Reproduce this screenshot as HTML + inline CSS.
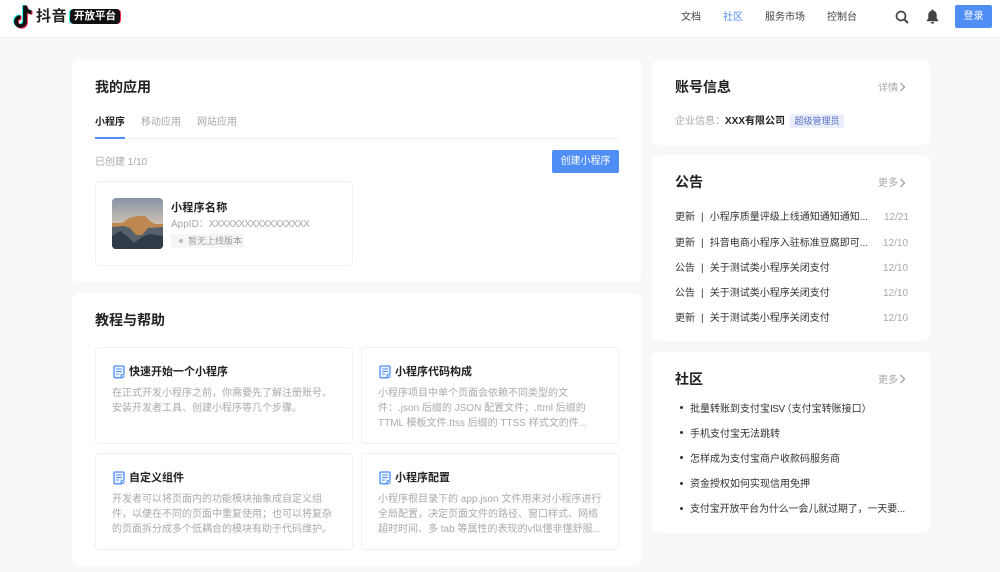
<!DOCTYPE html>
<html lang="zh"><head><meta charset="utf-8"><title>抖音开放平台</title>
<style>
*{margin:0;padding:0;box-sizing:border-box}
html,body{width:1000px;height:572px;overflow:hidden;background:#f8f8f8}
body{position:relative;font-family:"Liberation Sans","Noto Sans CJK SC",sans-serif;font-size:10px;color:#333}
.a{position:absolute;white-space:nowrap;line-height:14px}
.card{position:absolute;background:#fff;border-radius:7px}
.box{position:absolute;background:#fff;border:1px solid #f1f1f1;border-radius:4px}
.h{font-size:14px;font-weight:700;color:#222;line-height:20px}
.g{color:#a8a8a8}
.d{color:#aaa;line-height:15px}
.t{font-size:11px;font-weight:700;color:#222}
.n{color:#444}
.l{color:#333}
.r{word-spacing:.25px}
</style></head><body>
<div style="position:absolute;left:0;top:0;width:1000px;height:38px;background:#fff;border-bottom:1px solid #f0f0f0"></div>
<svg style="position:absolute;left:12px;top:5px" width="22" height="24" viewBox="0 0 22 24">
<g fill="none" stroke-width="3.800">
<g stroke="#25f4ee" transform="translate(-1 -.7)"><path d="M13 .5v16a4.500 4.500 0 1 1-4.500-4.500"/><path d="M13 1c.3 3.600 2.800 6 6.500 6.200"/></g>
<g stroke="#fe2c55" transform="translate(1 .8)"><path d="M13 .5v16a4.500 4.500 0 1 1-4.500-4.500"/><path d="M13 1c.3 3.600 2.800 6 6.500 6.200"/></g>
<g stroke="#111"><path d="M13 .5v16a4.500 4.500 0 1 1-4.500-4.500"/><path d="M13 1c.3 3.600 2.800 6 6.500 6.200"/></g>
</g></svg>
<div class="a" style="left:36px;top:7px;font-size:15px;line-height:20px;color:#222;font-weight:700;letter-spacing:.6px">抖音</div>
<div style="position:absolute;left:70px;top:9px;width:50px;height:15px;background:#111;border-radius:4px;box-shadow:-1px 0 0 #25f4ee,1px 0 0 #fe2c55"></div>
<div class="a" style="left:74px;top:9px;line-height:15px;font-size:10.500px;color:#fff;font-weight:700">开放平台</div>
<div class="a n" style="left:681px;top:11px">文档</div>
<div class="a" style="left:723px;top:11px;color:#4f8ef7">社区</div>
<div class="a n" style="left:765px;top:11px">服务市场</div>
<div class="a n" style="left:827px;top:11px">控制台</div>
<svg style="position:absolute;left:895px;top:10px" width="14" height="14" viewBox="0 0 14 14"><circle cx="6" cy="6" r="4.500" fill="none" stroke="#444" stroke-width="1.700"/><path d="M9.300 9.300L13 13" stroke="#444" stroke-width="2"/></svg>
<svg style="position:absolute;left:926px;top:9px" width="13" height="15" viewBox="0 0 13 15"><path d="M6.500 .5c-.8 0-1.100.5-1.100 1.200C3.400 2.300 2.300 3.800 2.300 6v3.500L.8 11.300v1h11.400v-1L10.700 9.500V6c0-2.200-1.100-3.700-3.100-4.300 0-.7-.3-1.200-1.100-1.200z" fill="#444"/><path d="M4.800 13h3.400a1.700 1.700 0 0 1-3.400 0z" fill="#444"/></svg>
<div class="a" style="left:955px;top:5px;width:37px;height:23px;line-height:24px;background:#4f8ef7;color:#fff;text-align:center;border-radius:2px">登录</div>

<div class="card" style="left:72px;top:60px;width:569px;height:222px"></div>
<div class="a h" style="left:95px;top:77px">我的应用</div>
<div class="a" style="left:95px;top:116px;color:#222;font-weight:700">小程序</div>
<div class="a g" style="left:141px;top:116px">移动应用</div>
<div class="a g" style="left:197px;top:116px">网站应用</div>
<div style="position:absolute;left:95px;top:138px;width:524px;height:1px;background:#f0f0f0"></div>
<div style="position:absolute;left:95px;top:137px;width:30px;height:2px;background:#4f8ef7"></div>
<div class="a g" style="left:95px;top:156px">已创建 1/10</div>
<div class="a" style="left:552px;top:150px;width:67px;height:23px;line-height:24px;background:#4f8ef7;color:#fff;text-align:center;border-radius:2px">创建小程序</div>
<div class="box" style="left:95px;top:181px;width:258px;height:85px"></div>
<svg style="position:absolute;left:112px;top:198px;border-radius:4px" width="51" height="51" viewBox="0 0 51 51">
<defs><linearGradient id="s" x1="0" y1="0" x2="0" y2="1"><stop offset="0" stop-color="#8694a6"/><stop offset=".5" stop-color="#cbbfb3"/></linearGradient></defs>
<rect width="51" height="51" fill="url(#s)"/>
<path d="M0 25l10 0 7-5 8-2 8 0 5 5 5 3 8 0v25H0z" fill="#bf8850"/>
<path d="M0 29l12-1 6 2 6 7 6 0 6-7 15-1v22H0z" fill="#56616b"/>
<path d="M0 38l8-5 8 6 6 6 8-6 8-3 13 2v13H0z" fill="#2f3b47"/>
</svg>
<div class="a" style="left:171px;top:201px;font-size:11px;font-weight:700;color:#222;letter-spacing:.3px">小程序名称</div>
<div class="a g" style="left:171px;top:218px">AppID：<span style="letter-spacing:-.77px">XXXXXXXXXXXXXXXXX</span></div>
<div style="position:absolute;left:171px;top:234px;width:73px;height:14px;background:#f5f5f5;border-radius:2px"></div>
<div style="position:absolute;left:179px;top:239px;width:4px;height:4px;background:#bbb;border-radius:50%"></div>
<div class="a" style="left:188px;top:234px;font-size:9px;color:#999">暂无上线版本</div>

<div class="card" style="left:72px;top:293px;width:569px;height:273px"></div>
<div class="a h" style="left:95px;top:310px">教程与帮助</div>

<div class="box" style="left:95px;top:347px;width:258px;height:97px"></div>
<div class="box" style="left:361px;top:347px;width:258px;height:97px"></div>
<div class="box" style="left:95px;top:453px;width:258px;height:97px"></div>
<div class="box" style="left:361px;top:453px;width:258px;height:97px"></div>

<svg style="position:absolute;left:113px;top:365px" width="13" height="14" viewBox="0 0 13 14"><path d="M9 12.800H2a1 1 0 0 1-1-1V2a1 1 0 0 1 1-1h8a1 1 0 0 1 1 1v7" fill="#eaf1fe" stroke="#4f8ef7" stroke-width="1.300"/><path d="M3.200 4h5.600M3.200 6.500h5.600M3.200 9h2.500" fill="none" stroke="#4f8ef7" stroke-width="1.100"/><circle cx="9.500" cy="11" r="1.500" fill="none" stroke="#4f8ef7" stroke-width="1.100"/></svg>
<svg style="position:absolute;left:379px;top:365px" width="13" height="14" viewBox="0 0 13 14"><path d="M9 12.800H2a1 1 0 0 1-1-1V2a1 1 0 0 1 1-1h8a1 1 0 0 1 1 1v7" fill="#eaf1fe" stroke="#4f8ef7" stroke-width="1.300"/><path d="M3.200 4h5.600M3.200 6.500h5.600M3.200 9h2.500" fill="none" stroke="#4f8ef7" stroke-width="1.100"/><circle cx="9.500" cy="11" r="1.500" fill="none" stroke="#4f8ef7" stroke-width="1.100"/></svg>
<svg style="position:absolute;left:113px;top:471px" width="13" height="14" viewBox="0 0 13 14"><path d="M9 12.800H2a1 1 0 0 1-1-1V2a1 1 0 0 1 1-1h8a1 1 0 0 1 1 1v7" fill="#eaf1fe" stroke="#4f8ef7" stroke-width="1.300"/><path d="M3.200 4h5.600M3.200 6.500h5.600M3.200 9h2.500" fill="none" stroke="#4f8ef7" stroke-width="1.100"/><circle cx="9.500" cy="11" r="1.500" fill="none" stroke="#4f8ef7" stroke-width="1.100"/></svg>
<svg style="position:absolute;left:379px;top:471px" width="13" height="14" viewBox="0 0 13 14"><path d="M9 12.800H2a1 1 0 0 1-1-1V2a1 1 0 0 1 1-1h8a1 1 0 0 1 1 1v7" fill="#eaf1fe" stroke="#4f8ef7" stroke-width="1.300"/><path d="M3.200 4h5.600M3.200 6.500h5.600M3.200 9h2.500" fill="none" stroke="#4f8ef7" stroke-width="1.100"/><circle cx="9.500" cy="11" r="1.500" fill="none" stroke="#4f8ef7" stroke-width="1.100"/></svg>

<div class="a t" style="left:129px;top:365px">快速开始一个小程序</div>
<div class="a d" style="left:112px;top:386px">在正式开发小程序之前，你需要先了解注册账号、<br>安装开发者工具、创建小程序等几个步骤。</div>
<div class="a t" style="left:395px;top:365px">小程序代码构成</div>
<div class="a d" style="left:378px;top:386px">小程序项目中单个页面会依赖不同类型的文<br>件：.json 后缀的 JSON 配置文件；.ttml 后缀的<br>TTML 模板文件.ttss 后缀的 TTSS 样式文的件...</div>
<div class="a t" style="left:129px;top:471px">自定义组件</div>
<div class="a d" style="left:112px;top:492px">开发者可以将页面内的功能模块抽象成自定义组<br>件，以便在不同的页面中重复使用；也可以将复杂<br>的页面拆分成多个低耦合的模块有助于代码维护。</div>
<div class="a t" style="left:395px;top:471px">小程序配置</div>
<div class="a d" style="left:378px;top:492px">小程序根目录下的 app.json 文件用来对小程序进行<br>全局配置，决定页面文件的路径、窗口样式、网络<br>超时时间、多 tab 等属性的表现的v似懂非懂舒服...</div>

<div class="card" style="left:652px;top:60px;width:278px;height:85px"></div>
<div class="a h" style="left:675px;top:77px">账号信息</div>
<div class="a g" style="left:878px;top:82px">详情</div>
<svg style="position:absolute;left:899px;top:82px" width="7" height="10" viewBox="0 0 7 10"><path d="M1.500 1l4 4-4 4" fill="none" stroke="#999" stroke-width="1.200"/></svg>
<div class="a g" style="left:675px;top:115px">企业信息：</div>
<div class="a" style="left:725px;top:115px;color:#222;font-weight:700">XXX有限公司</div>
<div class="a" style="left:790px;top:114px;width:54px;height:14px;line-height:14px;background:#eaeefc;color:#5a6fc4;font-size:9px;text-align:center;border-radius:2px">超级管理员</div>

<div class="card" style="left:652px;top:155px;width:278px;height:186px"></div>
<div class="a h" style="left:675px;top:172px">公告</div>
<div class="a g" style="left:878px;top:177px">更多</div>
<svg style="position:absolute;left:899px;top:178px" width="7" height="10" viewBox="0 0 7 10"><path d="M1.500 1l4 4-4 4" fill="none" stroke="#999" stroke-width="1.200"/></svg>
<div class="a l r" style="left:675px;top:211px">更新 &nbsp;|&nbsp; 小程序质量评级上线通知通知通知...</div><div class="a g" style="left:884px;top:211px">12/21</div>
<div class="a l r" style="left:675px;top:237px">更新 &nbsp;|&nbsp; 抖音电商小程序入驻标准豆腐即可...</div><div class="a g" style="left:883px;top:237px">12/10</div>
<div class="a l r" style="left:675px;top:262px">公告 &nbsp;|&nbsp; 关于测试类小程序关闭支付</div><div class="a g" style="left:883px;top:262px">12/10</div>
<div class="a l r" style="left:675px;top:287px">公告 &nbsp;|&nbsp; 关于测试类小程序关闭支付</div><div class="a g" style="left:883px;top:287px">12/10</div>
<div class="a l r" style="left:675px;top:312px">更新 &nbsp;|&nbsp; 关于测试类小程序关闭支付</div><div class="a g" style="left:883px;top:312px">12/10</div>

<div class="card" style="left:652px;top:352px;width:278px;height:181px"></div>
<div class="a h" style="left:675px;top:369px">社区</div>
<div class="a g" style="left:878px;top:374px">更多</div>
<svg style="position:absolute;left:899px;top:374px" width="7" height="10" viewBox="0 0 7 10"><path d="M1.500 1l4 4-4 4" fill="none" stroke="#999" stroke-width="1.200"/></svg>
<div style="position:absolute;left:680px;top:406px;width:3px;height:3px;border-radius:50%;background:#333"></div><div class="a l" style="left:690px;top:403px">批量转账到支付宝<span style="letter-spacing:-.5px">ISV</span><span style="margin-left:-3px">（</span>支付宝转账接口）</div>
<div style="position:absolute;left:680px;top:431px;width:3px;height:3px;border-radius:50%;background:#333"></div><div class="a l" style="left:690px;top:428px">手机支付宝无法跳转</div>
<div style="position:absolute;left:680px;top:456px;width:3px;height:3px;border-radius:50%;background:#333"></div><div class="a l" style="left:690px;top:453px">怎样成为支付宝商户收款码服务商</div>
<div style="position:absolute;left:680px;top:482px;width:3px;height:3px;border-radius:50%;background:#333"></div><div class="a l" style="left:690px;top:478px">资金授权如何实现信用免押</div>
<div style="position:absolute;left:680px;top:507px;width:3px;height:3px;border-radius:50%;background:#333"></div><div class="a l" style="left:690px;top:503px;letter-spacing:-.14px">支付宝开放平台为什么一会儿就过期了，一天要...</div>
</body></html>
